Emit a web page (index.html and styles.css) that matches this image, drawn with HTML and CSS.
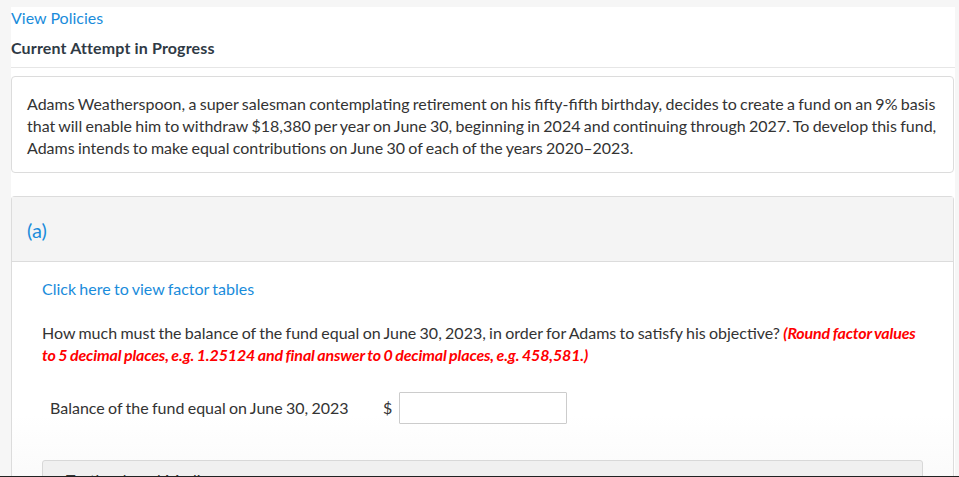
FILE: index.html
```html
<!DOCTYPE html>
<html>
<head>
<meta charset="utf-8">
<link rel="stylesheet" href="styles.css">
</head>
<body>
<div class="page">
  <div class="top">
    <a class="link policies" href="#">View Policies</a>
    <div class="attempt">Current Attempt in Progress</div>
  </div>
  <div class="question">
    Adams Weatherspoon, a super salesman contemplating retirement on his fifty-fifth birthday, decides to create a fund on an 9% basis that will enable him to withdraw $18,380 per year on June 30, beginning in 2024 and continuing through 2027. To develop this fund, Adams intends to make equal contributions on June 30 of each of the years 2020–2023.
  </div>
  <div class="part">
    <div class="part-head">(a)</div>
    <div class="part-body">
      <a class="link factor" href="#">Click here to view factor tables</a>
      <p class="ask">How much must the balance of the fund equal on June 30, 2023, in order for Adams to satisfy his objective? <em class="hint">(Round factor values to 5 decimal places, e.g. 1.25124 and final answer to 0 decimal places, e.g. 458,581.)</em></p>
      <div class="answer-row">
        <span class="answer-label">Balance of the fund equal on June 30, 2023</span>
        <span class="dollar">$</span>
        <input class="answer-input" type="text">
      </div>
      <div class="media">Textbook and Media</div>
    </div>
  </div>
</div>
</body>
</html>
```
FILE: styles.css
```css
html {
  height: 100%;
  box-sizing: border-box;
  border-bottom: 1px solid #222;
  overflow: hidden;
}
body {
  margin: 0;
  padding: 0;
  height: 100%;
  overflow: hidden;
  background: #f6f6f6;
  font-family: Lato, "Open Sans", sans-serif;
  color: #333;
  font-size: 16px;
  line-height: 22px;
  word-spacing: -0.8px;
}
.page {
  margin: 7px 4px 0 11px;
  background: #fff;
  min-height: 480px;
}
.link {
  color: #1a8cdb;
  text-decoration: none;
}
.top {
  border-bottom: 1px solid #e6e6e6;
  padding-bottom: 8px;
}
.policies {
  display: block;
  line-height: 22px;
  word-spacing: 0;
}
.attempt {
  margin-top: 8px;
  font-weight: bold;
  color: #2f3a45;
  word-spacing: 0;
  letter-spacing: 0.15px;
}
.question {
  margin-top: 8px;
  border: 1px solid #dcdcdc;
  border-radius: 4px;
  padding: 16px 15px 13px 15px;
  margin-right: 1px;
}
.part {
  margin-top: 23px;
  border: 1px solid #dcdcdc;
  border-bottom: none;
  border-radius: 4px 4px 0 0;
  margin-right: 1px;
}
.part-head {
  background: #f4f4f4;
  height: 65px;
  border-bottom: 1px solid #dcdcdc;
  color: #1a8cdb;
  font-size: 20px;
  line-height: 22px;
  padding: 22px 15px 0 15px;
  box-sizing: border-box;
}
.part-body {
  padding: 16px 30px 0 30px;
  background: linear-gradient(#fff 60%, #f7f7f7);
  height: 240px;
}
.factor {
  display: block;
}
.ask {
  margin: 22px 0 0 0;
}
.hint {
  color: #f00;
  font-weight: bold;
  font-style: italic;
  letter-spacing: -0.15px;
}
.answer-row {
  display: flex;
  align-items: center;
  margin-top: 26px;
  padding-left: 8px;
}
.answer-label {
  width: 333px;
}
.dollar {
  width: 16px;
}
.answer-input {
  width: 168px;
  height: 32px;
  box-sizing: border-box;
  border: 1px solid #ccc;
  border-radius: 1px;
  font: inherit;
  padding: 0 6px;
}
.media {
  margin-top: 36px;
  background: #f0f0f0;
  border: 1px solid #d8d8d8;
  border-radius: 3px;
  padding: 8px 23px;
  color: #333;
  word-spacing: 0;
}
```
